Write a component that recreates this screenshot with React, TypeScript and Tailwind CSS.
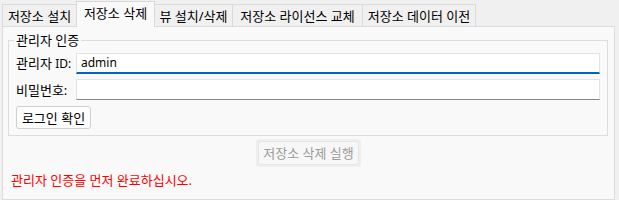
import React from "react";

const font = { fontFamily: '"Noto Sans", "Noto Sans CJK KR", sans-serif' };

function Tab({ label, w, active }: { label: string; w: string; active?: boolean }) {
  if (active) {
    return (
      <div
        className={`relative z-10 -mb-px h-[26px] ${w} -ml-px flex items-center justify-center border border-b-0 border-[#d9d9d9] bg-[#f9f9f9] pb-[3px] text-black`}
      >
        {label}
      </div>
    );
  }
  return (
    <div
      className={`h-[22px] ${w} -ml-px first:ml-0 flex items-center justify-center border border-b-0 border-[#dadada] bg-[#f0f0f0] text-black`}
    >
      {label}
    </div>
  );
}

export default function App() {
  return (
    <div className="w-[619px] h-[200px] overflow-hidden bg-[#f0f0f0] text-[13px] leading-[16px]" style={font}>
      <div className="flex h-[26px] items-end pl-[2px]">
        <Tab label="저장소 설치" w="w-[75px]" />
        <Tab label="저장소 삭제" w="w-[79px]" active />
        <Tab label="뷰 설치/삭제" w="w-[79px]" />
        <Tab label="저장소 라이선스 교체" w="w-[131px]" />
        <Tab label="저장소 데이터 이전" w="w-[114px]" />
      </div>
      <div className="ml-[2px] h-[174px] w-[613px] border border-[#dcdcdc] bg-[#f9f9f9] px-[4px]">
        <fieldset className="mt-[5px] ml-px w-[600px] border border-[#dcdcdc] pl-[5px] pr-[7px] pb-[6px]">
          <legend className="px-[2px] leading-[16px] text-black">관리자 인증</legend>
          <div className="mt-[5px] flex items-center">
            <div className="w-[62px] pl-[2px] text-black">
              관리자 <span className="text-[12px]">ID:</span>
            </div>
            <div className="flex h-[21px] w-[524px] items-center border border-[#e3e3e3] border-b-2 border-b-[#0067c0] bg-white pl-[4px] text-[12px] text-black">
              admin
            </div>
          </div>
          <div className="mt-[5px] flex items-center">
            <div className="w-[62px] pl-[2px] text-black">비밀번호:</div>
            <div className="h-[21px] w-[524px] border border-[#e3e3e3] border-b-[#868686] bg-white" />
          </div>
          <div className="mt-[6px] ml-[2px] flex">
            <div className="flex h-[23px] w-[75px] items-center justify-center rounded-[3px] border border-[#d0d0d0] bg-[#fdfdfd] text-black">
              로그인 확인
            </div>
          </div>
        </fieldset>
        <div className="mt-[3px] flex justify-center">
          <div className="rounded-[2px] bg-[#efefef] p-[2px]">
            <div className="flex h-[24px] w-[101px] items-center justify-center rounded-[3px] border border-[#e6e6e6] bg-[#f7f7f7] text-[#9a9a9a]">
              저장소 삭제 실행
            </div>
          </div>
        </div>
        <div className="mt-[5px] pl-[4px] text-[#ff0000]">관리자 인증을 먼저 완료하십시오.</div>
      </div>
    </div>
  );
}
